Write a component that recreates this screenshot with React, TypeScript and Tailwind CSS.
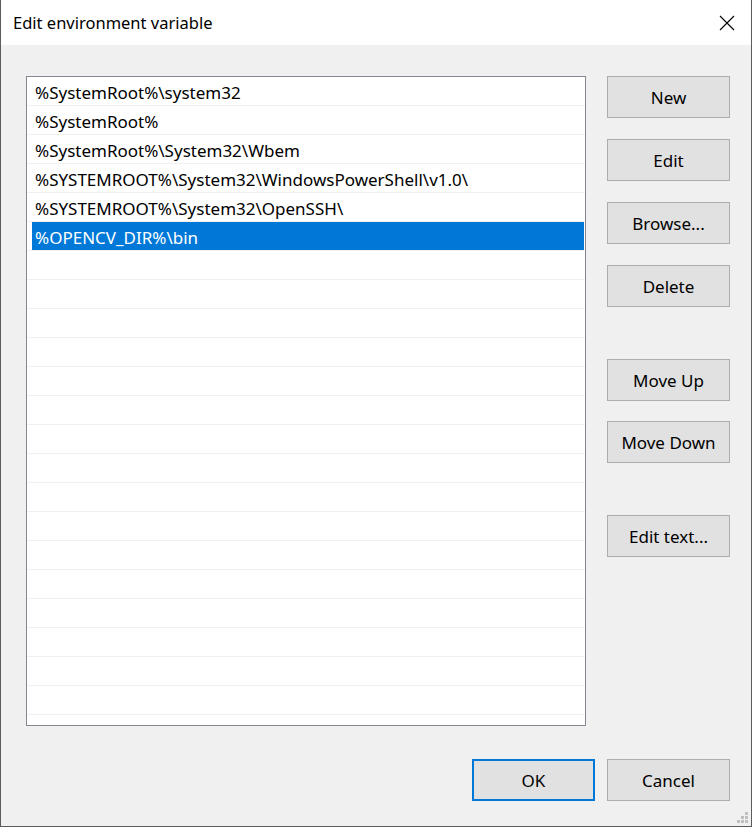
const paths = [
  "%SystemRoot%\\system32",
  "%SystemRoot%",
  "%SystemRoot%\\System32\\Wbem",
  "%SYSTEMROOT%\\System32\\WindowsPowerShell\\v1.0\\",
  "%SYSTEMROOT%\\System32\\OpenSSH\\",
  "%OPENCV_DIR%\\bin",
];

const selected = 5;

function Button({ label, className = "", primary = false }: { label: string; className?: string; primary?: boolean }) {
  return (
    <button
      className={
        "flex h-[42px] w-[123px] items-center justify-center bg-[#e1e1e1] pt-[1px] text-[17px] text-black " +
        (primary ? "border-2 border-[#0078d7] " : "border border-[#adadad] ") +
        className
      }
    >
      {label}
    </button>
  );
}

export default function App() {
  const rows = Array.from({ length: 23 }, (_, i) => paths[i] ?? "");

  return (
    <div
      className="relative flex h-[827px] w-[752px] flex-col border-x border-b border-[#5c5c5c] bg-[#f0f0f0] text-black"
      style={{ fontFamily: '"Noto Sans", "Open Sans", sans-serif' }}
    >
      {/* Title bar */}
      <div className="flex h-[45px] items-center justify-between bg-white pl-[12px] pr-[16px] pt-[1px]">
        <span className="text-[16.5px]">Edit environment variable</span>
        <svg width="16" height="16" viewBox="0 0 16 16">
          <path d="M1 1 L15 15 M15 1 L1 15" stroke="#000" strokeWidth="1.1" fill="none" />
        </svg>
      </div>

      {/* Body */}
      <div className="flex flex-1 flex-col pl-[25px] pr-[21px]">
        <div className="mt-[31px] flex gap-[21px]">
          {/* List */}
          <div className="h-[650px] w-[560px] overflow-hidden border border-[#828790] bg-white">
            {rows.map((p, i) => (
              <div key={i} className="h-[29px] border-b border-[#f0f0f0]">
                {i === selected ? (
                  <div className="ml-[5px] mr-[1px] flex h-[28px] items-center bg-[#0078d7] pl-[3px] pt-[3px] text-[17px] text-white">
                    {p}
                  </div>
                ) : (
                  <div className="flex h-[28px] items-center pl-[8px] pt-[3px] text-[17px]">{p}</div>
                )}
              </div>
            ))}
          </div>

          {/* Side buttons */}
          <div className="flex flex-col">
            <Button label="New" />
            <Button label="Edit" className="mt-[21px]" />
            <Button label="Browse..." className="mt-[21px]" />
            <Button label="Delete" className="mt-[21px]" />
            <Button label="Move Up" className="mt-[52px]" />
            <Button label="Move Down" className="mt-[20px]" />
            <Button label="Edit text..." className="mt-[52px]" />
          </div>
        </div>

        {/* Footer buttons */}
        <div className="mt-[33px] flex justify-end gap-[12px]">
          <Button label="OK" primary />
          <Button label="Cancel" />
        </div>
      </div>

      {/* Resize grip */}
      <svg width="12" height="12" viewBox="0 0 12 12" className="absolute bottom-[2px] right-[2px]">
        <rect x="8" y="0" width="3" height="3" fill="#bfbfbf" />
        <rect x="4" y="4" width="3" height="3" fill="#bfbfbf" />
        <rect x="8" y="4" width="3" height="3" fill="#bfbfbf" />
        <rect x="0" y="8" width="3" height="3" fill="#bfbfbf" />
        <rect x="4" y="8" width="3" height="3" fill="#bfbfbf" />
        <rect x="8" y="8" width="3" height="3" fill="#bfbfbf" />
      </svg>
    </div>
  );
}
